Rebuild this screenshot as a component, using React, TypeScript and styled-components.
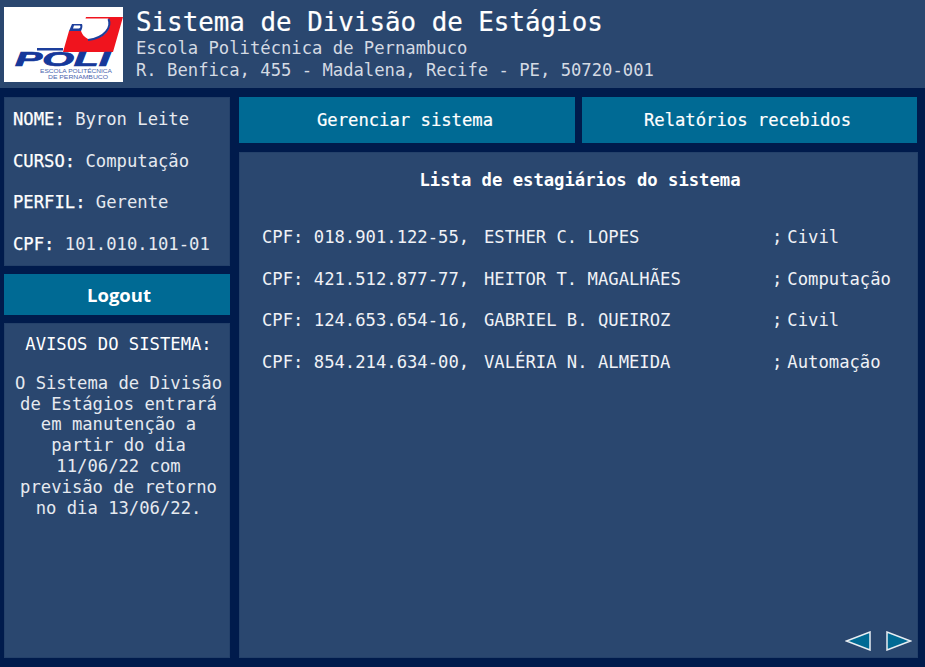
import React from "react";
import styled, { createGlobalStyle } from "styled-components";

const Global = createGlobalStyle`
  html, body { margin: 0; padding: 0; background: #001b4c; }
  * { box-sizing: border-box; }
`;

const mono = `"DejaVu Sans Mono", "Liberation Mono", monospace`;

const Page = styled.div`
  width: 925px;
  height: 667px;
  background: #001b4c;
  display: flex;
  flex-direction: column;
  font-family: ${mono};
  color: #fff;
  overflow: hidden;
`;

const Header = styled.header`
  height: 88px;
  background: #2a476f;
  display: flex;
  padding: 7px 0 0 4px;
  gap: 13px;
`;

const LogoBox = styled.div`
  width: 119px;
  height: 75px;
  background: #fff;
  flex: none;
`;

const Brand = styled.div`
  display: flex;
  flex-direction: column;
`;

const Title = styled.h1`
  margin: 0;
  font-size: 25.85px;
  line-height: 31px;
  font-weight: 400;
  height: 31px;
  -webkit-text-stroke: 0.2px #fff;
`;

const Sub = styled.div`
  font-size: 17.22px;
  line-height: 21.5px;
  color: #d4dae3;
`;

const Body = styled.div`
  flex: 1;
  display: grid;
  grid-template-columns: 226px 678px;
  gap: 9px;
  padding: 9px 8px 9px 4px;
  min-height: 0;
`;

const Side = styled.aside`
  display: flex;
  flex-direction: column;
  gap: 8px;
  min-height: 0;
`;

const Panel = styled.section`
  background: #2a476f;
  border: 1px solid #24416a;
`;

const Profile = styled(Panel)`
  height: 169px;
  padding: 10px 8px 0;
  display: flex;
  flex-direction: column;
  justify-content: flex-start;
  gap: 19.5px;
`;

const ProfileLine = styled.div`
  font-size: 17.22px;
  line-height: 22px;
  white-space: pre;
  color: #e6eaf0;
`;

const Key = styled.span`
  color: #fff;
  -webkit-text-stroke: 0.25px #fff;
`;

const Button = styled.button`
  background: #006a94;
  color: #fff;
  border: 0;
  padding: 0 4px 0 0;
  font-family: ${mono};
  font-size: 17.22px;
  cursor: pointer;
  -webkit-text-stroke: 0.2px #fff;
`;

const Logout = styled(Button)`
  height: 41px;
  padding: 0 0 0 4px;
  font-family: "Open Sans", "Noto Sans", sans-serif;
  font-size: 18.5px;
  font-weight: 700;
  flex: none;
  -webkit-text-stroke: 0;
`;

const Notice = styled(Panel)`
  flex: 1;
  padding: 10px 6px 0 9px;
  text-align: center;
  font-size: 17.22px;
  line-height: 20.8px;
  color: #e6eaf0;
`;

const NoticeTitle = styled.div`
  margin-bottom: 18px;
  color: #fff;
`;

const Main = styled.main`
  display: flex;
  flex-direction: column;
  gap: 9px;
  min-height: 0;
`;

const Tabs = styled.nav`
  display: grid;
  grid-template-columns: 336px 335px;
  gap: 7px;
  height: 46px;
  flex: none;
`;

const ListPanel = styled(Panel)`
  flex: 1;
  position: relative;
  margin-right: -1px;
  padding: 17px 22px 0;
`;

const ListTitle = styled.h2`
  margin: 0 0 25.5px;
  text-align: center;
  font-size: 17.22px;
  line-height: 21px;
  font-weight: 700;
  padding-left: 3px;
`;

const Row = styled.div`
  display: grid;
  grid-template-columns: 222px 288px 1fr;
  height: 41.6px;
  align-items: center;
  font-size: 17.22px;
  white-space: pre;
  color: #f0f2f6;
`;

const Course = styled.span`
  display: flex;
  gap: 5px;
`;

const Pager = styled.div`
  position: absolute;
  right: 5px;
  bottom: 6px;
  display: flex;
  gap: 15px;
`;

const Arrow = styled.svg`
  width: 26px;
  height: 20px;
  display: block;
`;

const Logo = () => (
  <svg width="119" height="75" viewBox="0 0 119 75">
    <path d="M82 10H119L109 45H59L65 24H78Z" fill="#f0141e" />
    <path d="M64 11.500H104C107 13 106 19 104 23C100 30 92 32 84 32C80 30 78 27 77 24L64 24Z" fill="#fff" />
    <path d="M104.500 12C108 20 101 31 84 33" fill="none" stroke="#1d3f9c" strokeWidth="2" />
    <path d="M68 17H78C79 19 78 22 77 24H65Z" fill="#1d3f9c" />
    <path d="M70 18.500H76C77 20 76 21 75 21.500H69Z" fill="#fff" />
    <rect x="33" y="41" width="26" height="2.500" fill="#1d3f9c" />
    <text x="11" y="59" fontFamily="'Liberation Sans', sans-serif" fontSize="19.500" fontWeight="700" fontStyle="italic" fill="#16389a" stroke="#16389a" strokeWidth="0.700" textLength="95" lengthAdjust="spacingAndGlyphs">POLI</text>
    <text x="36" y="65.500" fontFamily="'Liberation Sans', sans-serif" fontSize="6.200" fill="#4a63ad" textLength="72" lengthAdjust="spacingAndGlyphs">ESCOLA POLITÉCNICA</text>
    <text x="44" y="72" fontFamily="'Liberation Sans', sans-serif" fontSize="6.200" fill="#4a63ad" textLength="60" lengthAdjust="spacingAndGlyphs">DE PERNAMBUCO</text>
  </svg>
);

const students = [
  ["CPF: 018.901.122-55,", "ESTHER C. LOPES", "Civil"],
  ["CPF: 421.512.877-77,", "HEITOR T. MAGALHÃES", "Computação"],
  ["CPF: 124.653.654-16,", "GABRIEL B. QUEIROZ", "Civil"],
  ["CPF: 854.214.634-00,", "VALÉRIA N. ALMEIDA", "Automação"],
];

export default function App() {
  return (
    <Page>
      <Global />
      <Header>
        <LogoBox><Logo /></LogoBox>
        <Brand>
          <Title>Sistema de Divisão de Estágios</Title>
          <Sub>Escola Politécnica de Pernambuco</Sub>
          <Sub>R. Benfica, 455 - Madalena, Recife - PE, 50720-001</Sub>
        </Brand>
      </Header>
      <Body>
        <Side>
          <Profile>
            <ProfileLine><Key>NOME:</Key> Byron Leite</ProfileLine>
            <ProfileLine><Key>CURSO:</Key> Computação</ProfileLine>
            <ProfileLine><Key>PERFIL:</Key> Gerente</ProfileLine>
            <ProfileLine><Key>CPF:</Key> 101.010.101-01</ProfileLine>
          </Profile>
          <Logout>Logout</Logout>
          <Notice>
            <NoticeTitle>AVISOS DO SISTEMA:</NoticeTitle>
            O Sistema de Divisão de Estágios entrará em manutenção a partir do dia 11/06/22 com previsão de retorno no dia 13/06/22.
          </Notice>
        </Side>
        <Main>
          <Tabs>
            <Button>Gerenciar sistema</Button>
            <Button>Relatórios recebidos</Button>
          </Tabs>
          <ListPanel>
            <ListTitle>Lista de estagiários do sistema</ListTitle>
            {students.map((s) => (
              <Row key={s[0]}>
                <span>{s[0]}</span>
                <span>{s[1]}</span>
                <Course><span>;</span><span>{s[2]}</span></Course>
              </Row>
            ))}
            <Pager>
              <Arrow viewBox="0 0 26 20"><path d="M25 1V19L1.500 10Z" fill="#006a94" stroke="#e8edf2" strokeWidth="1.500" /></Arrow>
              <Arrow viewBox="0 0 26 20"><path d="M1 1V19L24.500 10Z" fill="#006a94" stroke="#e8edf2" strokeWidth="1.500" /></Arrow>
            </Pager>
          </ListPanel>
        </Main>
      </Body>
    </Page>
  );
}
